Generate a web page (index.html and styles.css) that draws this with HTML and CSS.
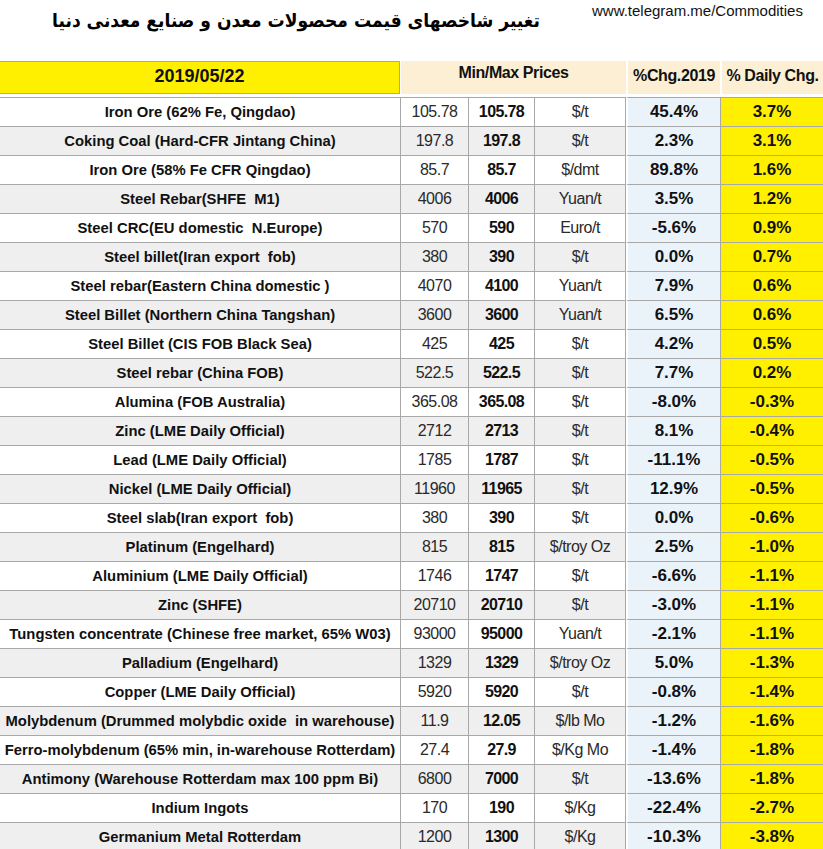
FILE: index.html
```html
<!DOCTYPE html>
<html lang="en">
<head>
<meta charset="utf-8">
<title>Commodities</title>
<link rel="stylesheet" href="styles.css">
</head>
<body>
<div class="page">
  <header class="top">
    <h1 class="title" dir="rtl" lang="fa">تغییر شاخصهای قیمت محصولات معدن و صنایع معدنی دنیا</h1>
    <div class="url">www.telegram.me/Commodities</div>
  </header>

  <div class="head">
    <div class="h-date">2019/05/22</div>
    <div class="h-peach h-minmax">Min/Max Prices</div>
    <div class="h-peach h-chg">%Chg.2019</div>
    <div class="h-peach h-daily">% Daily Chg.</div>
  </div>

  <table class="grid">
    <colgroup>
      <col class="c-name"><col class="c-min"><col class="c-max"><col class="c-unit"><col class="c-chg"><col class="c-daily">
    </colgroup>
    <tbody>
      <tr><td class="name">Iron Ore (62% Fe, Qingdao)</td><td class="min">105.78</td><td class="max">105.78</td><td class="unit">$/t</td><td class="chg">45.4%</td><td class="daily">3.7%</td></tr>
      <tr><td class="name">Coking Coal (Hard-CFR Jintang China)</td><td class="min">197.8</td><td class="max">197.8</td><td class="unit">$/t</td><td class="chg">2.3%</td><td class="daily">3.1%</td></tr>
      <tr><td class="name">Iron Ore (58% Fe CFR Qingdao)</td><td class="min">85.7</td><td class="max">85.7</td><td class="unit">$/dmt</td><td class="chg">89.8%</td><td class="daily">1.6%</td></tr>
      <tr><td class="name">Steel Rebar(SHFE&nbsp; M1)</td><td class="min">4006</td><td class="max">4006</td><td class="unit">Yuan/t</td><td class="chg">3.5%</td><td class="daily">1.2%</td></tr>
      <tr><td class="name">Steel CRC(EU domestic&nbsp; N.Europe)</td><td class="min">570</td><td class="max">590</td><td class="unit">Euro/t</td><td class="chg">-5.6%</td><td class="daily">0.9%</td></tr>
      <tr><td class="name">Steel billet(Iran export&nbsp; fob)</td><td class="min">380</td><td class="max">390</td><td class="unit">$/t</td><td class="chg">0.0%</td><td class="daily">0.7%</td></tr>
      <tr><td class="name">Steel rebar(Eastern China domestic )</td><td class="min">4070</td><td class="max">4100</td><td class="unit">Yuan/t</td><td class="chg">7.9%</td><td class="daily">0.6%</td></tr>
      <tr><td class="name">Steel Billet (Northern China Tangshan)</td><td class="min">3600</td><td class="max">3600</td><td class="unit">Yuan/t</td><td class="chg">6.5%</td><td class="daily">0.6%</td></tr>
      <tr><td class="name">Steel Billet (CIS FOB Black Sea)</td><td class="min">425</td><td class="max">425</td><td class="unit">$/t</td><td class="chg">4.2%</td><td class="daily">0.5%</td></tr>
      <tr><td class="name">Steel rebar (China FOB)</td><td class="min">522.5</td><td class="max">522.5</td><td class="unit">$/t</td><td class="chg">7.7%</td><td class="daily">0.2%</td></tr>
      <tr><td class="name">Alumina (FOB Australia)</td><td class="min">365.08</td><td class="max">365.08</td><td class="unit">$/t</td><td class="chg">-8.0%</td><td class="daily">-0.3%</td></tr>
      <tr><td class="name">Zinc (LME Daily Official)</td><td class="min">2712</td><td class="max">2713</td><td class="unit">$/t</td><td class="chg">8.1%</td><td class="daily">-0.4%</td></tr>
      <tr><td class="name">Lead (LME Daily Official)</td><td class="min">1785</td><td class="max">1787</td><td class="unit">$/t</td><td class="chg">-11.1%</td><td class="daily">-0.5%</td></tr>
      <tr><td class="name">Nickel (LME Daily Official)</td><td class="min">11960</td><td class="max">11965</td><td class="unit">$/t</td><td class="chg">12.9%</td><td class="daily">-0.5%</td></tr>
      <tr><td class="name">Steel slab(Iran export&nbsp; fob)</td><td class="min">380</td><td class="max">390</td><td class="unit">$/t</td><td class="chg">0.0%</td><td class="daily">-0.6%</td></tr>
      <tr><td class="name">Platinum (Engelhard)</td><td class="min">815</td><td class="max">815</td><td class="unit">$/troy Oz</td><td class="chg">2.5%</td><td class="daily">-1.0%</td></tr>
      <tr><td class="name">Aluminium (LME Daily Official)</td><td class="min">1746</td><td class="max">1747</td><td class="unit">$/t</td><td class="chg">-6.6%</td><td class="daily">-1.1%</td></tr>
      <tr><td class="name">Zinc (SHFE)</td><td class="min">20710</td><td class="max">20710</td><td class="unit">$/t</td><td class="chg">-3.0%</td><td class="daily">-1.1%</td></tr>
      <tr><td class="name">Tungsten concentrate (Chinese free market, 65% W03)</td><td class="min">93000</td><td class="max">95000</td><td class="unit">Yuan/t</td><td class="chg">-2.1%</td><td class="daily">-1.1%</td></tr>
      <tr><td class="name">Palladium (Engelhard)</td><td class="min">1329</td><td class="max">1329</td><td class="unit">$/troy Oz</td><td class="chg">5.0%</td><td class="daily">-1.3%</td></tr>
      <tr><td class="name">Copper (LME Daily Official)</td><td class="min">5920</td><td class="max">5920</td><td class="unit">$/t</td><td class="chg">-0.8%</td><td class="daily">-1.4%</td></tr>
      <tr><td class="name">Molybdenum (Drummed molybdic oxide&nbsp; in warehouse)</td><td class="min">11.9</td><td class="max">12.05</td><td class="unit">$/lb Mo</td><td class="chg">-1.2%</td><td class="daily">-1.6%</td></tr>
      <tr><td class="name">Ferro-molybdenum (65% min, in-warehouse Rotterdam)</td><td class="min">27.4</td><td class="max">27.9</td><td class="unit">$/Kg Mo</td><td class="chg">-1.4%</td><td class="daily">-1.8%</td></tr>
      <tr><td class="name">Antimony (Warehouse Rotterdam max 100 ppm Bi)</td><td class="min">6800</td><td class="max">7000</td><td class="unit">$/t</td><td class="chg">-13.6%</td><td class="daily">-1.8%</td></tr>
      <tr><td class="name">Indium Ingots</td><td class="min">170</td><td class="max">190</td><td class="unit">$/Kg</td><td class="chg">-22.4%</td><td class="daily">-2.7%</td></tr>
      <tr><td class="name">Germanium Metal Rotterdam</td><td class="min">1200</td><td class="max">1300</td><td class="unit">$/Kg</td><td class="chg">-10.3%</td><td class="daily">-3.8%</td></tr>
    </tbody>
  </table>
</div>
</body>
</html>
```

FILE: styles.css
```css
html, body {
  margin: 0;
  padding: 0;
  background: #ffffff;
}

.page {
  width: 823px;
  font-family: "Liberation Sans", Arial, sans-serif;
  color: #111;
}

/* ---------- top title area ---------- */
.top {
  height: 61px;
  display: flex;
  align-items: flex-start;
}

.title {
  margin: 0;
  padding-top: 7px;
  width: 592px;
  text-align: center;
  white-space: nowrap;
  font-family: "DejaVu Sans Condensed", "DejaVu Sans", sans-serif;
  font-stretch: condensed;
  font-weight: bold;
  font-size: 19px;
  line-height: 26px;
  color: #000;
}

.url {
  padding-top: 2px;
  font-size: 15px;
  line-height: 18px;
  color: #111;
  white-space: nowrap;
}

/* ---------- header row ---------- */
.head {
  display: grid;
  grid-template-columns: 401px 227px 94px 101px;
  height: 33px;
  margin-bottom: 3px;
}

.h-date {
  background: #fff000;
  border: 1px solid #a8a8a8;
  border-left: none;
  margin-right: 1px;
  font-weight: bold;
  font-size: 18px;
  display: flex;
  align-items: center;
  justify-content: center;
  padding-bottom: 2px;
}

.h-peach {
  background: #fcefd3;
  font-weight: bold;
  font-size: 16px;
  letter-spacing: -0.4px;
  white-space: nowrap;
  display: flex;
  justify-content: center;
}

.h-minmax {
  margin-right: 2px;
  align-items: flex-start;
  padding-top: 3px;
}

.h-chg {
  margin-right: 2px;
  align-items: center;
  padding-bottom: 4px;
}

.h-daily {
  align-items: center;
  padding-bottom: 4px;
}

/* ---------- data table ---------- */
.grid {
  width: 823px;
  table-layout: fixed;
  border-collapse: separate;
  border-spacing: 0;
}

.c-name { width: 401px; }
.c-min { width: 68px; }
.c-max { width: 66px; }
.c-unit { width: 91px; }
.c-chg { width: 95px; }
.c-daily { width: 102px; }

.grid td {
  height: 28px;
  padding: 0;
  text-align: center;
  vertical-align: middle;
  white-space: nowrap;
  border-right: 1px solid #a8a8a8;
  border-bottom: 1px solid #a8a8a8;
  background: #ffffff;
}

.grid tr:first-child td {
  border-top: 1px solid #a8a8a8;
}

.grid tr:nth-child(even) td {
  background: #efefef;
}

.grid td:last-child {
  border-right: none;
}

.grid td.name {
  font-weight: bold;
  font-size: 14.8px;
  color: #111;
}

.grid td.min,
.grid td.unit {
  font-size: 16px;
  letter-spacing: -0.5px;
  color: #2a2a2a;
}

.grid td.max {
  font-weight: bold;
  font-size: 16px;
  letter-spacing: -0.6px;
  color: #111;
}

.grid td.chg,
.grid tr:nth-child(even) td.chg {
  background: #eaf3fa;
  border-left: 2px solid #ffffff;
  font-weight: bold;
  font-size: 17px;
  color: #111;
}

.grid td.daily,
.grid tr:nth-child(even) td.daily {
  background: #fff000;
  font-weight: bold;
  font-size: 17px;
  color: #111;
}
```
